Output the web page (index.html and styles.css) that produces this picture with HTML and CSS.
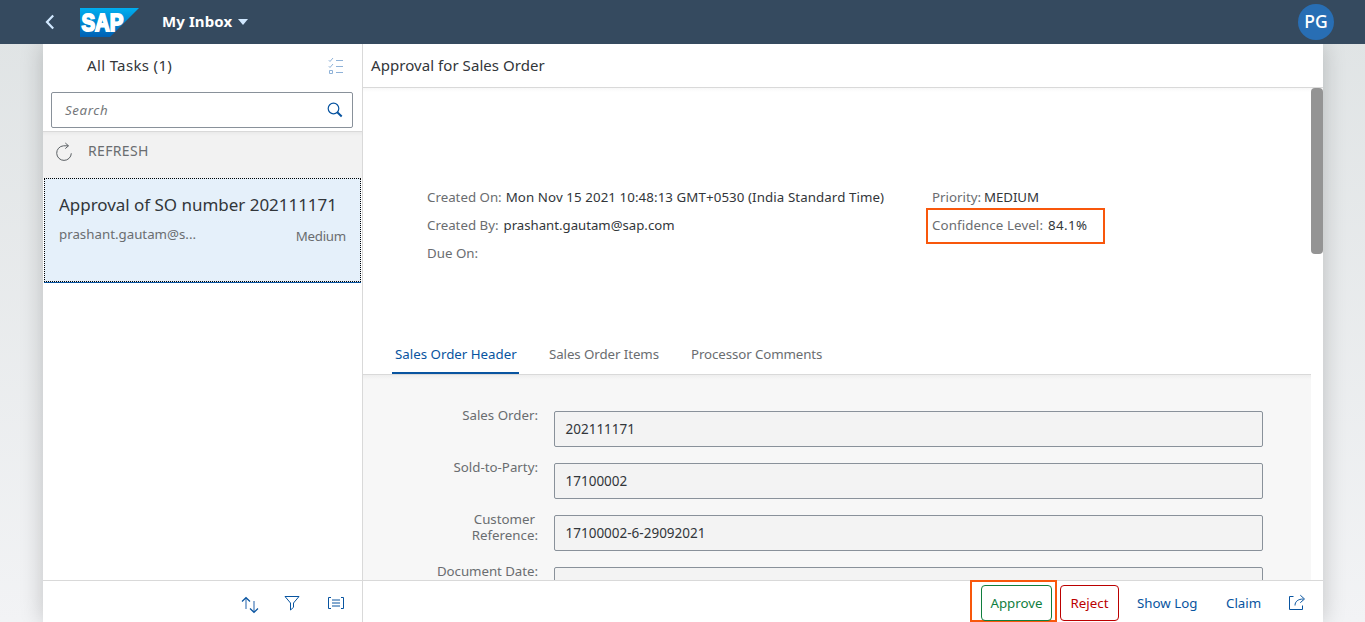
FILE: index.html
```html
<!DOCTYPE html>
<html lang="en">
<head>
<meta charset="utf-8">
<title>My Inbox</title>
<link rel="stylesheet" href="styles.css">
</head>
<body>
<header class="shell">
  <svg class="back" width="12" height="16" viewBox="0 0 12 16"><path d="M9.200 1.500 3 8l6.200 6.500" fill="none" stroke="#d1e8ff" stroke-width="2.200"/></svg>
  <svg class="logo" width="60" height="30" viewBox="0 0 60 30">
    <defs><linearGradient id="sap" x1="0" y1="0" x2="0" y2="1"><stop offset="0" stop-color="#00aeef"/><stop offset="1" stop-color="#0060b4"/></linearGradient></defs>
    <path d="M0 0h59L30 29H0z" fill="url(#sap)"/>
    <text class="logo-text" x="1.500" y="22.800" textLength="42" lengthAdjust="spacingAndGlyphs">SAP</text>
  </svg>
  <span class="app-title">My Inbox</span>
  <span class="caret"></span>
  <span class="avatar">PG</span>
</header>
<div class="app">
  <aside class="master">
    <div class="master-title"><span class="all-tasks">All Tasks (1)</span>
      <svg width="16" height="18" viewBox="0 0 16 18" fill="none" stroke="#8fb2d8"><path d="M.8 3.200 2 4.500 5 1M.8 9.200 2 10.500 5 7M1.500 13.500h3v3h-3zM8 3.500h7M8 9.500h7M8 15.500h7"/></svg>
    </div>
    <div class="search"><span class="placeholder">Search</span>
      <svg width="16" height="16" viewBox="0 0 16 16" fill="none" stroke="#0854a0"><circle cx="6.500" cy="6.500" r="5.300" stroke-width="1.200"/><path d="m10.300 10.300 4.400 4.200" stroke-width="2"/></svg>
    </div>
    <div class="refresh">
      <svg width="18" height="20" viewBox="0 0 18 20" fill="none" stroke="#5b6064"><path d="M13.300 3.800H8.500a7.300 7.300 0 1 0 7.800 7.500M10.300 1l3.200 2.800-3.200 2.800"/></svg>
      <span>REFRESH</span>
    </div>
    <div class="task">
      <div class="task-title">Approval of SO number 202111171</div>
      <div class="task-row"><span class="task-by">prashant.gautam@s...</span><span class="task-prio">Medium</span></div>
    </div>
    <div class="spacer"></div>
    <div class="master-foot">
      <svg class="sort" width="18" height="18" viewBox="0 0 18 18" fill="none" stroke="#0854a0"><path d="M5 2v11M13 5v11" stroke="#90b0d5" stroke-width="2"/><path d="M1 5.500 5 1.700l4 3.800M9 12.500l4 3.800 4-3.800" stroke-width="1.200"/></svg>
      <svg class="filter" width="16" height="16" viewBox="0 0 16 16" fill="none" stroke="#0854a0"><path d="M1 1.500h14L9.500 8v4.300l-3 2.700V8z"/></svg>
      <svg width="18" height="14" viewBox="0 0 18 14" fill="none" stroke="#0854a0"><path d="M4 1.500H1.500v11H4M14 1.500h2.500v11H14M5 4h8M5 7h8M5 10h8"/></svg>
    </div>
  </aside>
  <main class="detail">
    <div class="detail-title"><span>Approval for Sales Order</span></div>
    <div class="scroll">
      <div class="content">
        <div class="info">
          <div class="info-col">
            <div class="attr"><span class="k k-on">Created On:</span><span class="v v-on">Mon Nov 15 2021 10:48:13 GMT+0530 (India Standard Time)</span></div>
            <div class="attr"><span class="k k-by">Created By:</span><span class="v v-by">prashant.gautam@sap.com</span></div>
            <div class="attr"><span class="k k-due">Due On:</span></div>
          </div>
          <div class="info-col">
            <div class="attr"><span class="k k-prio">Priority:</span><span class="v v-prio">MEDIUM</span></div>
            <div class="attr marked"><span class="k k-conf">Confidence Level:</span><span class="v v-conf">84.1%</span></div>
          </div>
        </div>
        <nav class="tabs">
          <span class="tab active">Sales Order Header</span>
          <span class="tab items">Sales Order Items</span>
          <span class="tab comments">Processor Comments</span>
        </nav>
        <div class="form">
          <div class="field"><label>Sales Order:</label><div class="input">202111171</div></div>
          <div class="field"><label>Sold-to-Party:</label><div class="input">17100002</div></div>
          <div class="field"><label><span class="line">Customer</span>Reference:</label><div class="input">17100002-6-29092021</div></div>
          <div class="field"><label class="date">Document Date:</label><div class="input"></div></div>
        </div>
      </div>
      <div class="track"><div class="thumb"></div></div>
    </div>
    <div class="detail-foot">
      <div class="mark"><span class="btn approve">Approve</span></div>
      <span class="btn reject">Reject</span>
      <span class="link log">Show Log</span>
      <span class="link claim">Claim</span>
      <svg width="18" height="18" viewBox="0 0 18 18" fill="none" stroke="#0854a0"><path d="M5.500 2.500h-4v13h13v-4M7 11.500c0-4 3-6.500 8.500-6.500M12.300 1.200 16.500 5l-4.200 3.700"/></svg>
    </div>
  </main>
</div>
</body>
</html>
```
FILE: styles.css
```css
* { box-sizing: border-box; }
body {
  margin: 0; width: 1365px; height: 622px; overflow: hidden;
  display: flex; flex-direction: column;
  font: 13.3px/20px "Noto Sans", "Open Sans", sans-serif; color: #32363a;
  background: linear-gradient(#dfe3e4, #f2f3f5);
}
span, label { white-space: nowrap; }
svg { display: block; flex: none; }
.shell { height: 44px; flex: none; background: #354a5f; display: flex; align-items: center; padding: 0 31px 0 44px; z-index: 1; }
.logo { margin-left: 24px; margin-top: 2px; }
.logo-text { font: bold 23px "Liberation Sans", sans-serif; fill: #fff; stroke: #fff; stroke-width: 1.8px; }
.app-title { font-weight: 700; font-size: 15px; color: #fff; margin: -2px 0 0 22px; width: 71px; letter-spacing: .1px; }
.caret { margin-left: 5px; border: 5px solid transparent; border-top: 6px solid #d1e8ff; border-bottom: 0; }
.avatar { margin-left: auto; width: 36px; height: 36px; border-radius: 50%; background: #286eb4; color: #fff; font-size: 17.5px; font-weight: 500; line-height: 35px; text-align: center; }
.app { flex: 1; min-height: 0; width: 1280px; margin-left: 43px; display: flex; background: #fff; box-shadow: 0 0 22px rgba(0, 0, 0, .2); }
.master { width: 320px; border-right: 1px solid #d9d9d9; display: flex; flex-direction: column; }
.master-title { height: 44px; flex: none; display: flex; align-items: center; justify-content: space-between; padding: 0 18px 0 44px; }
.all-tasks { font-size: 15px; letter-spacing: .35px; margin-top: -2px; }
.search { margin: 4px 9px 3px 8px; height: 36px; flex: none; border: 1px solid #89919a; border-radius: 2px; display: flex; align-items: center; justify-content: space-between; padding: 0 9px 0 13px; }
.placeholder { font-style: italic; color: #74777a; letter-spacing: .6px; }
.refresh { height: 47px; flex: none; border-top: 1px solid #d9d9d9; background: linear-gradient(#eaeaea, #f2f2f2 4px); display: flex; padding: 10px 12px; gap: 15px; color: #6a6d70; }
.refresh span { line-height: 18px; font-size: 14px; letter-spacing: .35px; }
.task { height: 104px; flex: none; border: 1px dotted #000; margin: 0 1px; background: #e5f0fa; padding: 15px 14px 0; box-shadow: 0 1px #0854a0; }
.task-title { font-size: 17px; line-height: 22px; white-space: nowrap; letter-spacing: -.03px; }
.task-row { display: flex; justify-content: space-between; color: #6a6d70; margin-top: 8px; }
.task-prio { margin-top: 2px; letter-spacing: -.25px; }
.spacer { flex: 1; }
.master-foot { height: 42px; flex: none; border-top: 1px solid #d9d9d9; display: flex; align-items: center; justify-content: flex-end; gap: 26px; padding: 2px 17px 0 0; }
.sort { margin-top: 4px; }
.filter { margin: 0 1px 0 -1px; }
.detail { flex: 1; display: flex; flex-direction: column; min-width: 0; }
.detail-title { height: 44px; flex: none; border-bottom: 1px solid #d9d9d9; padding: 11px 8px; font-size: 15px; letter-spacing: .06px; }
.scroll { flex: 1; min-height: 0; display: flex; overflow: hidden; background: linear-gradient(#f8f8f8, #fff 4px); }
.content { width: 948px; }
.track { width: 12px; }
.thumb { height: 166px; border-radius: 4px; background: #949494; }
.info { height: 247px; display: flex; padding: 95px 0 0 64px; }
.info-col { width: 505px; flex: none; }
.info-col + .info-col { width: 300px; }
.attr { height: 28px; padding-top: 4px; display: flex; }
.k { color: #6a6d70; flex: none; margin-right: 4px; }
.k-by { margin-right: 5px; }
.k-prio { margin-right: 3px; }
.v-on { letter-spacing: .09px; }
.v-by { font-size: 13.2px; }
.v-prio { letter-spacing: -.1px; }
.k-conf { letter-spacing: .1px; margin-right: 5px; }
.v-conf { letter-spacing: .4px; }
.marked { outline: 2px solid #f8570c; outline-offset: -2px; width: 179px; height: 36px; margin: -3px 0 0 -6px; padding: 7px 0 0 6px; }
.tabs { height: 40px; display: flex; padding-left: 29px; border-bottom: 1px solid #d9d9d9; color: #6a6d70; }
.tab { padding: 9px 3px 0; height: 39px; }
.tab.active { color: #0854a0; border-bottom: 2px solid #0854a0; width: 127px; border-radius: 2px 2px 0 0; }
.tab.items { margin-left: 27px; width: 116px; letter-spacing: -.08px; }
.tab.comments { margin-left: 26px; letter-spacing: -.1px; }
.form { height: 220px; background: linear-gradient(#eeeeee, #f7f7f7 5px); padding-top: 36px; }
.field { display: flex; height: 52px; }
.field label { width: 175px; text-align: right; color: #6a6d70; line-height: 16px; margin-top: -4px; }
.field .date { letter-spacing: -.05px; }
.line { display: block; margin-right: 3px; }
.input { margin-left: 16px; width: 709px; height: 36px; border: 1px solid #89919a; border-radius: 2px; background: #f3f3f3; padding-left: 10.5px; line-height: 34px; font-size: 13.5px; }
.detail-foot { height: 42px; flex: none; border-top: 1px solid #d9d9d9; display: flex; padding-left: 607px; color: #0854a0; line-height: 44px; }
.mark { width: 87px; height: 42px; margin-top: -1px; border: 2px solid #f8570c; padding: 3px 3px 0 9px; }
.btn { display: block; height: 36px; border: 1px solid; border-radius: 4px; line-height: 34px; text-align: center; }
.approve { color: #107e3e; }
.reject { color: #bb0000; width: 59px; margin: 4px 0 0 3px; }
.log { margin-left: 18px; width: 60px; }
.claim { margin-left: 29px; width: 35px; }
.detail-foot svg { margin: 13px 0 0 27px; }
```
